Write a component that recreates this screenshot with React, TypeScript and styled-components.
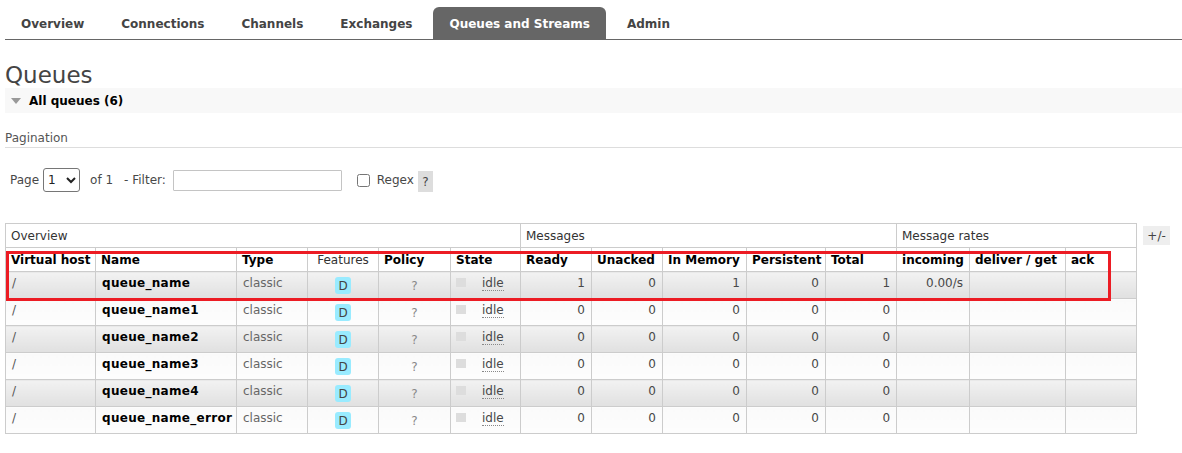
import React from 'react';
import styled, {createGlobalStyle} from 'styled-components';

const GlobalStyle = createGlobalStyle`
    body {
        margin: 0;
        font-family: "DejaVu Sans", Verdana, sans-serif;
        font-size: 12px;
        color: #484848;
        background: #fff;
    }
`;

const Page = styled.div`
    padding-left: 5px;
`;

const Tabs = styled.ul`
    display: flex;
    gap: 5px;
    margin: 0;
    padding: 7px 0 0 0;
    list-style: none;
    border-bottom: 1px solid #666;
`;

const Tab = styled.li<{$active?: boolean}>`
    height: 32px;
    padding: 1px 16px 0 16px;
    box-sizing: border-box;
    display: flex;
    align-items: center;
    font-weight: bold;
    color: ${p => p.$active ? '#fff' : '#444'};
    background: ${p => p.$active ? '#666' : 'transparent'};
    border-radius: 6px 6px 0 0;
`;

const Title = styled.h1`
    margin: 23px 0 0 0;
    font-size: 23px;
    line-height: 25px;
    font-weight: normal;
    color: #444;
`;

const SectionBar = styled.div`
    height: 25px;
    display: flex;
    align-items: center;
    gap: 8px;
    padding-left: 6px;
    background: #f8f8f8;
    font-weight: bold;
    color: #000;
`;

const Arrow = styled.span`
    width: 0;
    height: 0;
    border-left: 5.5px solid transparent;
    border-right: 5.5px solid transparent;
    border-top: 6px solid #999;
`;

const SubTitle = styled.div`
    margin-top: 18px;
    padding-bottom: 2px;
    line-height: 14px;
    color: #555;
    border-bottom: 1px solid #ddd;
`;

const FilterRow = styled.div`
    margin-top: 18px;
    height: 24px;
    display: flex;
    align-items: center;
    padding-left: 5px;
    padding-top: 2px;
`;

const Label = styled.span<{$gap?: number}>`
    margin-right: ${p => p.$gap ?? 0}px;
`;

const Select = styled.select`
    width: 37px;
    height: 24px;
    margin: 0 10px 0 4px;
    font-family: "DejaVu Sans", Verdana, sans-serif;
    font-size: 12px;
    color: #222;
    border: 1px solid #767676;
    border-radius: 3px;
    background: #fff;
`;

const TextInput = styled.input`
    box-sizing: border-box;
    width: 169px;
    height: 21px;
    margin: 0 15px 0 7px;
    border: 1px solid #c4c4c4;
    border-radius: 1px;
`;

const Check = styled.input`
    width: 13px;
    height: 13px;
    margin: 0 7px 0 0;
`;

const Help = styled.span`
    margin-left: 4px;
    height: 21px;
    width: 15px;
    display: inline-flex;
    align-items: center;
    justify-content: center;
    background: #ddd;
    color: #444;
    margin-top: 3px;
`;

const TableRow = styled.div`
    margin-top: 31px;
    display: flex;
    align-items: flex-start;
    gap: 6px;
`;

const TableWrap = styled.div`
    position: relative;
`;

const Table = styled.table`
    width: 1131px;
    table-layout: fixed;
    border-collapse: collapse;
`;

const Col = styled.col<{$w: number}>`
    width: ${p => p.$w}px;
`;

const GroupHead = styled.th`
    height: 23px;
    padding: 0 5px;
    border: 1px solid #ccc;
    background: #fff;
    font-weight: normal;
    color: #333;
    text-align: left;
`;

const Head = styled.th<{$light?: boolean; $center?: boolean}>`
    height: 23px;
    padding: 0 5px;
    border: 1px solid #ccc;
    border-top: none;
    background: #fff;
    font-weight: ${p => p.$light ? 'normal' : 'bold'};
    color: ${p => p.$light ? '#333' : '#000'};
    text-align: ${p => p.$center ? 'center' : 'left'};
    white-space: nowrap;
    overflow: hidden;
`;

const Row = styled.tr<{$alt: boolean}>`
    td {
        background: ${p => p.$alt
            ? 'linear-gradient(#f2f2f2, #e0e0e0)'
            : 'linear-gradient(#fafafa, #fdfdfd)'};
    }
`;

const Cell = styled.td<{$align?: 'left' | 'right' | 'center'; $tone?: string; $bold?: boolean}>`
    height: 27px;
    box-sizing: border-box;
    padding: 4px 6px 0 6px;
    vertical-align: top;
    border: 1px solid #ccc;
    line-height: 14px;
    text-align: ${p => p.$align ?? 'left'};
    color: ${p => p.$tone ?? '#484848'};
    font-weight: ${p => p.$bold ? 'bold' : 'normal'};
    white-space: nowrap;
`;

const NameText = styled.span`
    letter-spacing: 0.3px;
`;

const Badge = styled.span`
    display: inline-flex;
    align-items: center;
    justify-content: center;
    width: 16px;
    height: 17px;
    margin-top: 1px;
    border-radius: 3px;
    background: #99ebff;
    color: #444;
`;

const Policy = styled.span`
    display: inline-block;
    padding-top: 3px;
    color: #888;
`;

const StateBox = styled.div`
    display: flex;
    align-items: flex-start;
    gap: 16px;
    margin-left: -1px;
`;

const Square = styled.span`
    width: 10px;
    height: 9px;
    margin-top: 2px;
    background: #ddd;
`;

const Idle = styled.abbr`
    text-decoration: none;
    border-bottom: 1px dotted #888;
    color: #484848;
`;

const ToggleColumns = styled.span`
    margin-top: 3px;
    width: 27px;
    height: 19px;
    display: flex;
    align-items: center;
    justify-content: center;
    background: #eee;
    color: #444;
`;

const Highlight = styled.div`
    position: absolute;
    left: 1px;
    top: 28px;
    width: 1105px;
    height: 50px;
    box-sizing: border-box;
    border: 3px solid #ec1c24;
    pointer-events: none;
`;

const tabs = ['Overview', 'Connections', 'Channels', 'Exchanges', 'Queues and Streams', 'Admin'];

const widths = [90, 141, 71, 71, 72, 70, 71, 71, 84, 79, 71, 73, 96, 71];

const headers = ['Virtual host', 'Name', 'Type', 'Features', 'Policy', 'State', 'Ready', 'Unacked',
    'In Memory', 'Persistent', 'Total', 'incoming', 'deliver / get', 'ack'];

const queues = [
    {name: 'queue_name', ready: 1, unacked: 0, mem: 1, persistent: 0, total: 1, incoming: '0.00/s'},
    {name: 'queue_name1', ready: 0, unacked: 0, mem: 0, persistent: 0, total: 0, incoming: ''},
    {name: 'queue_name2', ready: 0, unacked: 0, mem: 0, persistent: 0, total: 0, incoming: ''},
    {name: 'queue_name3', ready: 0, unacked: 0, mem: 0, persistent: 0, total: 0, incoming: ''},
    {name: 'queue_name4', ready: 0, unacked: 0, mem: 0, persistent: 0, total: 0, incoming: ''},
    {name: 'queue_name_error', ready: 0, unacked: 0, mem: 0, persistent: 0, total: 0, incoming: ''},
];

export const App: React.FC = () => {
    return (
        <Page>
            <GlobalStyle/>
            <Tabs>
                {tabs.map(t => <Tab key={t} $active={t === 'Queues and Streams'}>{t}</Tab>)}
            </Tabs>
            <Title>Queues</Title>
            <SectionBar><Arrow/>All queues (6)</SectionBar>
            <SubTitle>Pagination</SubTitle>
            <FilterRow>
                <Label>Page</Label>
                <Select defaultValue="1"><option value="1">1</option></Select>
                <Label $gap={11}>of 1</Label>
                <Label>- Filter:</Label>
                <TextInput type="text"/>
                <Check type="checkbox"/>
                <Label>Regex</Label>
                <Help>?</Help>
            </FilterRow>
            <TableRow>
                <TableWrap>
                    <Table>
                        <colgroup>
                            {widths.map((w, i) => <Col key={i} $w={w}/>)}
                        </colgroup>
                        <thead>
                            <tr>
                                <GroupHead colSpan={6}>Overview</GroupHead>
                                <GroupHead colSpan={5}>Messages</GroupHead>
                                <GroupHead colSpan={3}>Message rates</GroupHead>
                            </tr>
                            <tr>
                                {headers.map(h => (
                                    <Head key={h} $light={h === 'Features'} $center={h === 'Features'}>{h}</Head>
                                ))}
                            </tr>
                        </thead>
                        <tbody>
                            {queues.map((q, i) => (
                                <Row key={q.name} $alt={i % 2 === 0}>
                                    <Cell $tone="#555">/</Cell>
                                    <Cell $bold $tone="#000"><NameText>{q.name}</NameText></Cell>
                                    <Cell $tone="#666">classic</Cell>
                                    <Cell $align="center"><Badge>D</Badge></Cell>
                                    <Cell $align="center"><Policy>?</Policy></Cell>
                                    <Cell>
                                        <StateBox><Square/><Idle title="idle">idle</Idle></StateBox>
                                    </Cell>
                                    <Cell $align="right">{q.ready}</Cell>
                                    <Cell $align="right">{q.unacked}</Cell>
                                    <Cell $align="right">{q.mem}</Cell>
                                    <Cell $align="right">{q.persistent}</Cell>
                                    <Cell $align="right">{q.total}</Cell>
                                    <Cell $align="right">{q.incoming}</Cell>
                                    <Cell/>
                                    <Cell/>
                                </Row>
                            ))}
                        </tbody>
                    </Table>
                    <Highlight/>
                </TableWrap>
                <ToggleColumns>+/-</ToggleColumns>
            </TableRow>
        </Page>
    );
}

export default App;
